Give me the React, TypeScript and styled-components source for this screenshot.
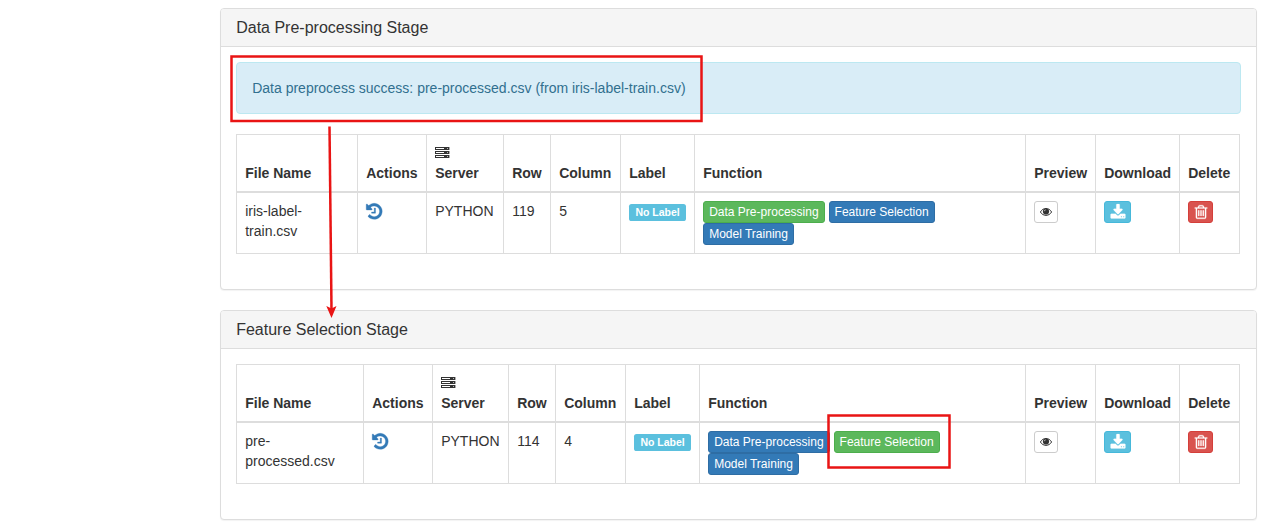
import React from "react";
import styled, { createGlobalStyle } from "styled-components";

const GlobalStyle = createGlobalStyle`
  *, *::before, *::after { box-sizing: border-box; }
  body {
    margin: 0;
    background: #fff;
    color: #333;
    font: 14px/20px "Liberation Sans", Arial, sans-serif;
    overflow: hidden;
  }
`;

const Page = styled.main`
  position: relative;
  height: 532px;
  padding: 8px 13px 0 220.2px;
`;

const Panel = styled.section`
  margin-bottom: 20px;
  background: #fff;
  border: 1px solid #ddd;
  border-radius: 4px;
  box-shadow: 0 1px 1px rgba(0, 0, 0, 0.05);
`;

const PanelHeading = styled.header`
  padding: 10px 15px;
  background: #f5f5f5;
  border-bottom: 1px solid #ddd;
  border-radius: 3px 3px 0 0;
`;

const PanelTitle = styled.h3`
  margin: 0;
  font-size: 16px;
  font-weight: 400;
  line-height: 17px;
`;

const PanelBody = styled.div`
  padding: 15px 15px 35px;
`;

const Alert = styled.div`
  margin-bottom: 20px;
  padding: 15px;
  color: #31708f;
  background: #d9edf7;
  border: 1px solid #bce8f1;
  border-radius: 4px;
`;

const Table = styled.table`
  width: 1004px;
  table-layout: fixed;
  border-collapse: collapse;
  border: 1px solid #ddd;
`;

const HeadCell = styled.th`
  height: 57.5px;
  padding: 8px;
  text-align: left;
  vertical-align: bottom;
  border: 1px solid #ddd;
  border-bottom-width: 2px;
`;

const Cell = styled.td`
  height: 61px;
  padding: 8px;
  vertical-align: top;
  border: 1px solid #ddd;
`;

const Label = styled.span`
  display: inline;
  padding: 2.1px 6.2px 3.15px;
  color: #fff;
  background: #5bc0de;
  border-radius: 2.6px;
  font-size: 10.5px;
  font-weight: 700;
  line-height: 1;
  white-space: nowrap;
  vertical-align: baseline;
`;

const tones = {
  plain: ["#fff", "#ccc", "#333"],
  primary: ["#337ab7", "#2e6da4", "#fff"],
  success: ["#5cb85c", "#4cae4c", "#fff"],
  info: ["#5bc0de", "#46b8da", "#fff"],
  danger: ["#d9534f", "#d43f3a", "#fff"],
};
type Tone = keyof typeof tones;

const Button = styled.button<{ $tone: Tone }>`
  display: inline-block;
  height: 22px;
  margin: 0;
  padding: 1px 5px;
  color: ${(p) => tones[p.$tone][2]};
  background: ${(p) => tones[p.$tone][0]};
  border: 1px solid ${(p) => tones[p.$tone][1]};
  border-radius: 3px;
  font: 12px/18px "Liberation Sans", Arial, sans-serif;
  white-space: nowrap;
  vertical-align: middle;
`;

const ButtonGroup = styled.div`
  display: flex;
  flex-wrap: wrap;
  column-gap: 4px;
  max-width: 250px;
`;

const IconButton = styled(Button)<{ $width: number }>`
  display: flex;
  align-items: center;
  justify-content: center;
  width: ${(p) => p.$width}px;
`;

const Icon = styled.svg`
  display: block;
  flex: none;
  fill: currentColor;
`;

const HistoryLink = styled.a`
  display: block;
  height: 20px;
  padding-top: 1px;
  color: #337ab7;
`;

const ServerHeading = styled.div`
  display: flex;
  flex-direction: column;
  gap: 4px;
`;

const Annotations = styled.svg`
  position: absolute;
  inset: 0;
  pointer-events: none;
`;

const HistoryIcon = () => (
  <Icon width="18.667" height="18.667" viewBox="108 0 1792 1792" overflow="visible">
    <path stroke="currentColor" strokeWidth="30" d="M1664 896q0 156-61 298t-164 245-245 164-298 61q-172 0-327-72.5t-264-204.5q-7-10-6.5-22.5t8.5-20.5l137-138q10-9 25-9 16 2 23 12 73 95 179 147t225 52q104 0 198.5-40.5t163.5-109.5 109.5-163.5 40.5-198.5-40.5-198.5-109.5-163.5-163.5-109.5-198.5-40.5q-98 0-188 35.5t-160 101.5l137 138q31 30 14 69-17 40-59 40h-448q-26 0-45-19t-19-45v-448q0-42 40-59 39-17 69 14l130 129q107-101 244.5-156.5t284.5-55.5q156 0 298 61t245 164 164 245 61 298zm-640-288v448q0 14-9 23t-23 9h-320q-14 0-23-9t-9-23v-64q0-14 9-23t23-9h224v-352q0-14 9-23t23-9h64q14 0 23 9t9 23z" />
  </Icon>
);

const ServerIcon = () => (
  <Icon width="15" height="12" viewBox="0 0 15 12">
    {[0, 4, 8].map((y) => (
      <g key={y}>
        <path fillRule="evenodd" d={`M0 ${y}H14.4V${y + 3}H0ZM1 ${y + 1}V${y + 2}H9V${y + 1}Z`} />
        <rect x="12" y={y + 1} width="1" height="1" fill="#bbb" />
      </g>
    ))}
  </Icon>
);

const EyeIcon = () => (
  <Icon width="12" height="12" viewBox="0 0 12 12">
    <path fill="none" stroke="currentColor" strokeWidth="1" d="M.4 6C3 1.3 9 1.3 11.6 6C9 10.5 3 10.5 .4 6Z" />
    <circle cx="6" cy="5.5" r="3.1" />
    <path d="M4.4 5.2Q4.5 3.8 5.7 3.8" fill="none" stroke="#fff" strokeWidth=".6" />
  </Icon>
);

const DownloadIcon = () => (
  <Icon width="16" height="17" viewBox="64 0 1792 1792" preserveAspectRatio="none" overflow="visible">
    <path stroke="currentColor" strokeWidth="20" transform="translate(64 0)" d="M1344 1344q0-26-19-45t-45-19-45 19-19 45 19 45 45 19 45-19 19-45zm256 0q0-26-19-45t-45-19-45 19-19 45 19 45 45 19 45-19 19-45zm128-224v320q0 40-28 68t-68 28h-1472q-40 0-68-28t-28-68v-320q0-40 28-68t68-28h465l135 136q58 56 136 56t136-56l136-136h464q40 0 68 28t28 68zm-325-569q17 41-14 70l-448 448q-18 19-45 19t-45-19l-448-448q-31-29-14-70 17-39 59-39h256v-448q0-26 19-45t45-19h256q26 0 45 19t19 45v448h256q42 0 59 39z" />
  </Icon>
);

const TrashIcon = () => (
  <Icon width="16" height="16" viewBox="0 0 1792 1792">
    <path stroke="currentColor" strokeWidth="30" d="M704 736v576q0 14-9 23t-23 9h-64q-14 0-23-9t-9-23v-576q0-14 9-23t23-9h64q14 0 23 9t9 23zm256 0v576q0 14-9 23t-23 9h-64q-14 0-23-9t-9-23v-576q0-14 9-23t23-9h64q14 0 23 9t9 23zm256 0v576q0 14-9 23t-23 9h-64q-14 0-23-9t-9-23v-576q0-14 9-23t23-9h64q14 0 23 9t9 23zm128 724v-948h-896v948q0 22 7 40.5t14.5 27 10.5 8.5h832q3 0 10.5-8.5t14.5-27 7-40.5zm-672-1076h448l-48-117q-7-9-17-11h-317q-10 2-17 11zm928 32v64q0 14-9 23t-23 9h-96v948q0 83-47 143.5t-113 60.5h-832q-66 0-113-58.5t-47-141.5v-952h-96q-14 0-23-9t-9-23v-64q0-14 9-23t23-9h309l70-167q15-37 54-63t79-26h320q40 0 79 26t54 63l70 167h309q14 0 23 9t9 23z" />
  </Icon>
);

const functions = ["Data Pre-processing", "Feature Selection", "Model Training"];

interface StageProps {
  title: string;
  message?: string;
  file: [string, string];
  rows: number;
  columns: number;
  active: string;
  widths: number[];
}

const Stage = ({ title, message, file, rows, columns, active, widths }: StageProps) => (
  <Panel>
    <PanelHeading>
      <PanelTitle>{title}</PanelTitle>
    </PanelHeading>
    <PanelBody>
      {message && <Alert>{message}</Alert>}
      <Table>
        <colgroup>
          {widths.map((width, i) => (
            <col key={i} width={width} />
          ))}
        </colgroup>
        <thead>
          <tr>
            <HeadCell>File Name</HeadCell>
            <HeadCell>Actions</HeadCell>
            <HeadCell>
              <ServerHeading>
                <ServerIcon />
                Server
              </ServerHeading>
            </HeadCell>
            <HeadCell>Row</HeadCell>
            <HeadCell>Column</HeadCell>
            <HeadCell>Label</HeadCell>
            <HeadCell>Function</HeadCell>
            <HeadCell>Preview</HeadCell>
            <HeadCell>Download</HeadCell>
            <HeadCell>Delete</HeadCell>
          </tr>
        </thead>
        <tbody>
          <tr>
            <Cell>
              {file[0]}
              <br />
              {file[1]}
            </Cell>
            <Cell>
              <HistoryLink>
                <HistoryIcon />
              </HistoryLink>
            </Cell>
            <Cell>PYTHON</Cell>
            <Cell>{rows}</Cell>
            <Cell>{columns}</Cell>
            <Cell>
              <Label>No Label</Label>
            </Cell>
            <Cell>
              <ButtonGroup>
                {functions.map((name) => (
                  <Button key={name} $tone={name === active ? "success" : "primary"}>
                    {name}
                  </Button>
                ))}
              </ButtonGroup>
            </Cell>
            <Cell>
              <IconButton $tone="plain" $width={24} aria-label="Preview">
                <EyeIcon />
              </IconButton>
            </Cell>
            <Cell>
              <IconButton $tone="info" $width={27} aria-label="Download">
                <DownloadIcon />
              </IconButton>
            </Cell>
            <Cell>
              <IconButton $tone="danger" $width={25} aria-label="Delete">
                <TrashIcon />
              </IconButton>
            </Cell>
          </tr>
        </tbody>
      </Table>
    </PanelBody>
  </Panel>
);

const App = () => (
  <>
    <GlobalStyle />
    <Page>
      <Stage
        title="Data Pre-processing Stage"
        message="Data preprocess success: pre-processed.csv (from iris-label-train.csv)"
        file={["iris-label-", "train.csv"]}
        rows={119}
        columns={5}
        active="Data Pre-processing"
        widths={[121, 69, 77, 47, 70, 74, 331, 70, 84, 60]}
      />
      <Stage
        title="Feature Selection Stage"
        file={["pre-", "processed.csv"]}
        rows={114}
        columns={4}
        active="Feature Selection"
        widths={[127, 69, 76, 47, 70, 74, 326, 70, 84, 60]}
      />
      <Annotations width="1270" height="532" viewBox="0 0 1270 532" fill="none" stroke="#e91414" strokeWidth="2.5">
        <rect x="231.5" y="56.5" width="470" height="64.5" />
        <rect x="828.5" y="415.5" width="121" height="52" />
        <path d="M329.5 126.5L331.5 309" />
        <path d="M326.3 306L331.5 308.5L336.5 306L331.5 318Z" fill="#e91414" stroke="none" />
      </Annotations>
    </Page>
  </>
);

export default App;
